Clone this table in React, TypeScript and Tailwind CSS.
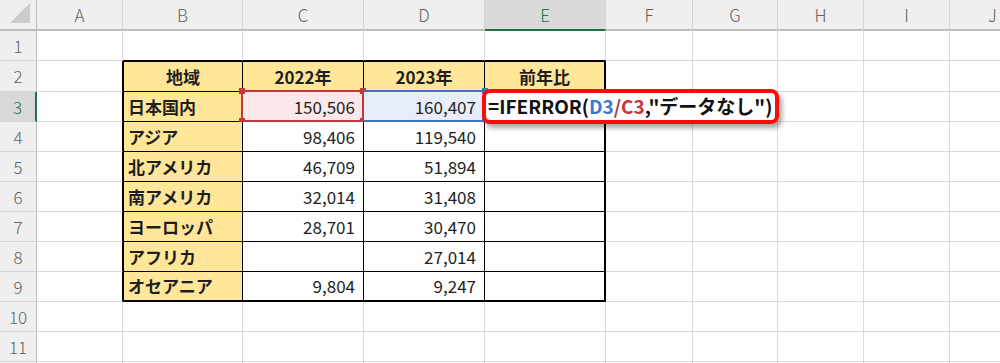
import React from "react";

type Col = { key: string; w: string };

const cols: Col[] = [
  { key: "A", w: "w-[86px]" },
  { key: "B", w: "w-[120px]" },
  { key: "C", w: "w-[121px]" },
  { key: "D", w: "w-[121px]" },
  { key: "E", w: "w-[121px]" },
  { key: "F", w: "w-[87px]" },
  { key: "G", w: "w-[85px]" },
  { key: "H", w: "w-[86px]" },
  { key: "I", w: "w-[86px]" },
  { key: "J", w: "w-[86px]" },
];

const regions: [string, string, string][] = [
  ["日本国内", "150,506", "160,407"],
  ["アジア", "98,406", "119,540"],
  ["北アメリカ", "46,709", "51,894"],
  ["南アメリカ", "32,014", "31,408"],
  ["ヨーロッパ", "28,701", "30,470"],
  ["アフリカ", "", "27,014"],
  ["オセアニア", "9,804", "9,247"],
];

// row 12 only peeks in at the bottom edge, so its number is left out
const rows = [1, 2, 3, 4, 5, 6, 7, 8, 9, 10, 11, 12];

function rowHeight(r: number) {
  return r === 2 ? "h-[31px]" : "h-[30px]";
}

function cellBorders(r: number, ci: number) {
  const inTable = r >= 2 && r <= 9 && ci >= 1 && ci <= 4;
  let right = "border-r border-r-[#dadada]";
  let bottom = "border-b border-b-[#dadada]";
  let extra = "";
  if (inTable) {
    right = ci === 4 ? "border-r-2 border-r-black" : "border-r border-r-black";
    bottom = r === 9 ? "border-b-2 border-b-black" : "border-b border-b-black";
    if (ci === 1) extra += " border-l border-l-black";
    if (r === 2) extra += " border-t border-t-black";
  } else if (ci === 0 && r >= 2 && r <= 9) {
    right = "border-r border-r-black";
  } else if (r === 1 && ci >= 1 && ci <= 4) {
    bottom = "border-b border-b-black";
  }
  return `${right} ${bottom}${extra}`;
}

// C3 reference frame with its four handles
function RedRef() {
  return (
    <div className="absolute -left-[2px] -top-[2px] -right-[1px] -bottom-[1px] border-2 border-[#c8363d] bg-[#fbe8ea]">
      <span className="absolute -left-[4px] -top-[4px] w-[6px] h-[6px] bg-[#c8363d]" />
      <span className="absolute -right-[4px] -top-[4px] w-[6px] h-[6px] bg-[#c8363d]" />
      <span className="absolute -left-[4px] -bottom-[4px] w-[6px] h-[6px] bg-[#c8363d]" />
      <span className="absolute -right-[4px] -bottom-[4px] w-[6px] h-[6px] bg-[#c8363d]" />
    </div>
  );
}

// D3 reference frame (left side is shared with C3)
function BlueRef() {
  return (
    <div className="absolute left-0 -top-[2px] -right-[1px] -bottom-[1px] border-y-2 border-[#4472c4] bg-[#e8eef9]">
      <span className="absolute -right-[3px] -top-[4px] w-[6px] h-[6px] bg-[#4472c4]" />
      <span className="absolute -right-[3px] -bottom-[4px] w-[6px] h-[6px] bg-[#4472c4]" />
    </div>
  );
}

function FormulaBox() {
  return (
    <div className="absolute -left-[3px] -top-[3px] z-20 w-[297px] h-[35px] rounded-[8px] border-4 border-[#ff0a0a] bg-white shadow-[3px_4px_5px_rgba(0,0,0,0.35)] flex items-center pl-[2px] text-[19px] font-bold text-[#111] whitespace-nowrap">
      <span>=IFERROR(</span>
      <span className="text-[#3a78d0]">D3</span>
      <span className="text-[#a23b55]">/</span>
      <span className="text-[#c8363d]">C3</span>
      <span>,"データなし")</span>
    </div>
  );
}

function cellContent(r: number, ci: number) {
  if (r === 2 && ci >= 1 && ci <= 4) {
    const labels = ["地域", "2022年", "2023年", "前年比"];
    return <div className="w-full text-center font-bold">{labels[ci - 1]}</div>;
  }
  if (r >= 3 && r <= 9) {
    const row = regions[r - 3];
    if (ci === 1) return <div className="pl-[4px] font-bold">{row[0]}</div>;
    if (ci === 2 || ci === 3) {
      return <div className="relative z-10 w-full text-right pr-[8px]">{row[ci - 1]}</div>;
    }
  }
  return null;
}

function cellBg(r: number, ci: number) {
  if (r === 2 && ci >= 1 && ci <= 4) return "bg-[#ffe699]";
  if (r >= 3 && r <= 9 && ci === 1) return "bg-[#ffe699]";
  return "bg-white";
}

export default function App() {
  return (
    <div className="w-[1000px] h-[363px] overflow-hidden bg-white font-['Noto_Sans_CJK_JP','Noto_Sans',sans-serif] text-[17px] text-[#1f1f1f]">
      {/* column headers */}
      <div className="flex">
        <div className="shrink-0 w-[37px] h-[31px] bg-[#efefef] border-r border-r-[#bdbdbd] border-b-2 border-b-[#bcbcbc] flex items-end justify-end">
          <svg width="26" height="26" viewBox="0 0 26 26" className="mb-[3px] mr-[3px]">
            <polygon points="3,23 23,23 23,3" fill="#cbcbcb" />
          </svg>
        </div>
        {cols.map((c) => (
          <div
            key={c.key}
            className={`shrink-0 ${c.w} h-[31px] flex items-center justify-center text-[17px] font-light border-r border-r-[#d4d4d4] border-b-2 ${
              c.key === "E"
                ? "bg-[#dadada] text-[#217346] border-b-[#217346]"
                : "bg-[#efefef] text-[#5f5f5f] border-b-[#bcbcbc]"
            }`}
          >
            {c.key}
          </div>
        ))}
      </div>

      {rows.map((r) => (
        <div key={r} className="flex">
          <div
            className={`shrink-0 w-[37px] ${rowHeight(r)} flex items-center justify-center text-[17px] font-light border-b border-b-[#d4d4d4] ${
              r === 3
                ? "bg-[#d9d9d9] text-[#217346] border-r-2 border-r-[#217346]"
                : "bg-[#efefef] text-[#5f5f5f] border-r border-r-[#bdbdbd]"
            }`}
          >
            {r < 12 ? r : null}
          </div>
          {cols.map((c, ci) => (
            <div
              key={c.key}
              className={`relative shrink-0 ${c.w} ${rowHeight(r)} flex items-center ${cellBg(r, ci)} ${cellBorders(r, ci)}`}
            >
              {r === 3 && ci === 2 && <RedRef />}
              {r === 3 && ci === 3 && <BlueRef />}
              {r === 3 && ci === 4 && <FormulaBox />}
              {cellContent(r, ci)}
            </div>
          ))}
        </div>
      ))}
    </div>
  );
}
